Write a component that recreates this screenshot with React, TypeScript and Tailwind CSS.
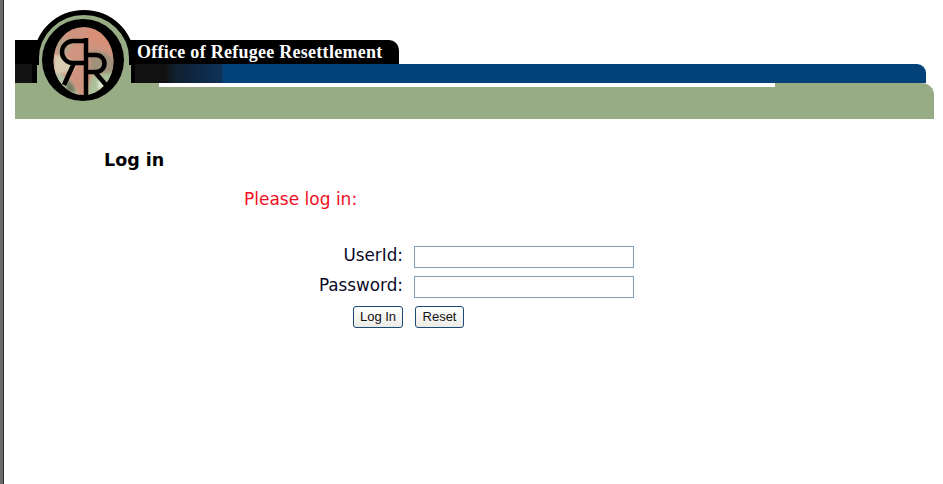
const Logo = () => (
  <svg className="absolute left-[15px] top-[-35px] z-20" width="110" height="105" viewBox="0 0 110 105">
    <defs>
      <clipPath id="photo">
        <ellipse cx="53.5" cy="56" rx="30" ry="34" />
      </clipPath>
      <filter id="soft" x="-20%" y="-20%" width="140%" height="140%">
        <feGaussianBlur stdDeviation="1.6" />
      </filter>
    </defs>
    <path d="M7 78 V53 a47 45 0 0 1 94 0 V78 Z" fill="#97ab84" />
    <path d="M6.5 60 V53 a47.5 45.5 0 0 1 95 0 V60" fill="none" stroke="#000" strokeWidth="5" />
    <circle cx="53" cy="55" r="41" fill="#000" />
    <g clipPath="url(#photo)">
      <rect x="20" y="20" width="70" height="72" fill="#cf9480" />
      <g filter="url(#soft)">
        <path d="M24 36 Q36 30 44 36 Q40 50 30 54 Z" fill="#b9a088" />
        <path d="M24 50 Q40 50 46 62 Q38 70 24 68 Z" fill="#d8cdb0" />
        <path d="M22 68 Q38 66 50 92 L22 92 Z" fill="#b4c4a6" />
        <path d="M60 46 Q78 44 86 58 L84 70 Q70 70 60 64 Z" fill="#a0927c" />
        <path d="M62 70 Q76 68 86 68 L80 92 L56 92 Z" fill="#a9c09a" />
        <path d="M56 22 Q74 24 84 44 Q70 40 58 34 Z" fill="#d98f76" />
        <path d="M36 74 Q44 78 46 88 L36 86 Z" fill="#6f7a60" />
        <path d="M68 74 Q76 74 78 82 L68 84 Z" fill="#dfe6cf" />
      </g>
    </g>
    <path d="M56 33 V90 M56 36 H43 a11 11 0 0 0 0 22 H56 M44 58 L34 80 M56 50 H66 a8 8 0 0 1 0 17 H56 M64 66 L76 80" fill="none" stroke="#000" strokeWidth="4.5" />
  </svg>
);

const App = () => {
  return (
    <div className="h-[484px] w-[943px] overflow-hidden border-l-[3px] border-l-[#6b6b6b] bg-white font-['DejaVu_Sans',sans-serif]">
      <div className="h-full border-l border-l-[#2a2a2a] pt-10">
        <div className="relative ml-[11px] w-[919px]">
          <div className="relative z-10 flex h-6 w-[384px] items-center rounded-tr-[10px] bg-black pl-[122px]">
            <span className="font-['Liberation_Serif',serif] text-[18px] font-bold leading-none tracking-[0.27px] text-white">Office of Refugee Resettlement</span>
          </div>
          <div className="mr-2 h-[19px] rounded-tr-[9px] bg-[linear-gradient(90deg,#131313_0,#131313_17px,#000_17px,#000_120px,#111_120px,#111_150px,#10202f_160px,#0d2a4a_190px,#0f3258_207px,#04427a_208px,#04427a_100%)]"></div>
          <div className="h-9 rounded-tr-[12px] bg-[#97ab84]">
            <div className="ml-[144px] h-1 w-[616px] bg-white"></div>
          </div>
          <Logo />
        </div>
        <div className="pl-[100px] pt-[29px]">
          <h1 className="text-[17.5px] font-bold leading-6 text-black">Log in</h1>
          <p className="ml-[140px] mt-[15px] text-[17px] leading-6 text-[#f00f22]">Please log in:</p>
          <form className="ml-[101px] mt-[35px] flex w-[430px] flex-col gap-2">
            <div className="flex items-center gap-[11px]">
              <label className="w-[198px] pb-1 text-right text-[16.8px] leading-[18px] text-[#0a0a28]">UserId:</label>
              <input type="text" className="h-[22px] w-[220px] border border-[#7f9db9] bg-white" />
            </div>
            <div className="flex items-center gap-[11px]">
              <label className="w-[198px] pb-1 text-right text-[16.8px] leading-[18px] text-[#0a0a28]">Password:</label>
              <input type="password" className="h-[22px] w-[220px] border border-[#7f9db9] bg-white" />
            </div>
            <div className="flex gap-3 pl-[148px]">
              <button type="button" className="h-[22px] w-[50px] rounded-[3px] border border-[#1c4a76] bg-gradient-to-b from-white to-[#ecebe5] font-['Liberation_Sans',sans-serif] text-[13px] text-[#111]">Log In</button>
              <button type="button" className="h-[22px] w-[49px] rounded-[3px] border border-[#1c4a76] bg-gradient-to-b from-white to-[#ecebe5] font-['Liberation_Sans',sans-serif] text-[13px] text-[#111]">Reset</button>
            </div>
          </form>
        </div>
      </div>
    </div>
  );
};

export default App;
